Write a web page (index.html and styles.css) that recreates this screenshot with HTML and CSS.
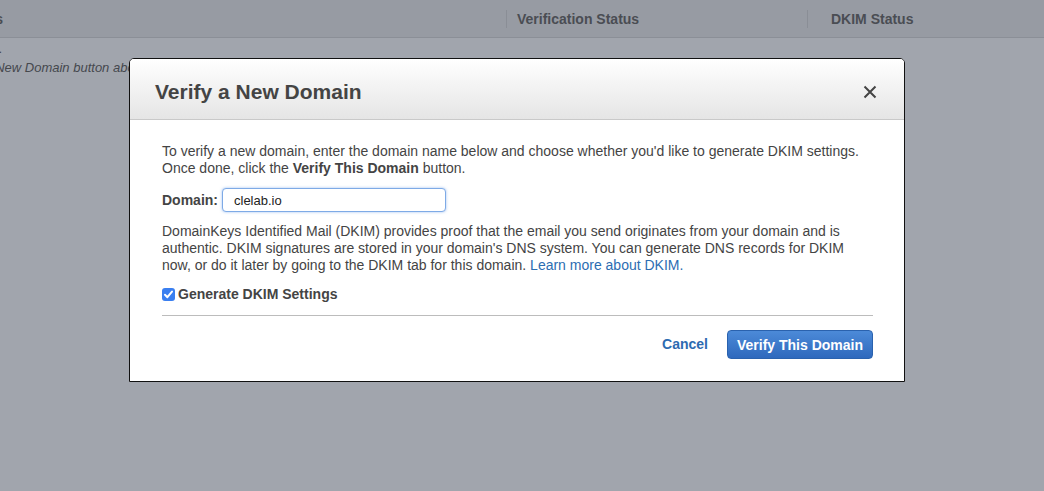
FILE: index.html
```html
<!DOCTYPE html>
<html lang="en">
<head>
    <meta charset="UTF-8">
    <title>Verify a New Domain</title>
    <link rel="stylesheet" href="styles.css">
</head>
<body>
    <!-- Domain list behind the dialog -->
    <div class="domain-table">
        <div class="table-head">
            <div class="col col-name">Domains</div>
            <div class="col col-verify">Verification Status</div>
            <div class="col col-dkim">DKIM Status</div>
        </div>
        <div class="empty-msg">
            <p class="found">No domains found.</p>
            <p class="hint">To get started, click the Verify a New Domain button above.</p>
        </div>
    </div>

    <!-- Verify dialog -->
    <div class="dialog">
        <div class="dialog-header">
            <h2>Verify a New Domain</h2>
            <button class="close-btn" aria-label="Close">
                <svg width="14" height="14" viewBox="0 0 14 14">
                    <path d="M1.5 1.5 L12.5 12.5 M12.5 1.5 L1.5 12.5" stroke="#444" stroke-width="2" fill="none"/>
                </svg>
            </button>
        </div>
        <div class="dialog-body">
            <p>To verify a new domain, enter the domain name below and choose whether you'd like to generate DKIM settings. Once done, click the <b>Verify This Domain</b> button.</p>

            <div class="domain-row">
                <label for="domain">Domain:</label>
                <input id="domain" class="domain-input" type="text" value="clelab.io">
            </div>

            <p>DomainKeys Identified Mail (DKIM) provides proof that the email you send originates from your domain and is authentic. DKIM signatures are stored in your domain's DNS system. You can generate DNS records for DKIM now, or do it later by going to the DKIM tab for this domain. <a href="#">Learn more about DKIM.</a></p>

            <div class="check-row">
                <span class="checkbox">
                    <svg width="13" height="13" viewBox="0 0 13 13">
                        <path d="M3 6.8 L5.4 9.2 L10 3.6" stroke="#fff" stroke-width="2" fill="none" stroke-linecap="round" stroke-linejoin="round"/>
                    </svg>
                </span>
                <span class="check-label">Generate DKIM Settings</span>
            </div>

            <div class="dialog-footer">
                <a href="#" class="cancel-link">Cancel</a>
                <button class="verify-btn">Verify This Domain</button>
            </div>
        </div>
    </div>
</body>
</html>
```

FILE: styles.css
```css
/* General styling */
body {
    font-family: "Liberation Sans", Arial, sans-serif;
    margin: 0;
    padding: 0;
    width: 1044px;
    height: 491px;
    overflow: hidden;
    background-color: #a1a5ad;
    color: #444;
}

/* Domain list (behind the dialog) */
.domain-table {
    margin-left: -54px;
}

.table-head {
    display: flex;
    height: 37px;
    align-items: center;
    background-color: #979ba3;
    border-bottom: 1px solid #8b8f97;
    font-size: 14px;
    font-weight: bold;
    color: #4a4d53;
}

.col {
    height: 18px;
    line-height: 18px;
    padding-left: 10px;
}

.col-name {
    width: 560px;
    padding-left: 0;
    text-indent: -2px;
}

.col-verify {
    width: 290px;
    border-left: 1px solid #8a8e96;
}

.col-dkim {
    border-left: 1px solid #8a8e96;
    padding-left: 23px;
}

.empty-msg {
    padding-top: 1px;
    font-size: 13px;
    line-height: 19px;
    color: #45484d;
    white-space: nowrap;
}

.empty-msg p {
    margin: 0;
}

.empty-msg .found {
    width: 180px;
    margin-left: -124px;
    text-align: right;
}

.empty-msg .hint {
    width: 420px;
    margin-left: -214px;
    text-align: right;
    font-style: italic;
}

/* Dialog */
.dialog {
    position: absolute;
    left: 129px;
    top: 58px;
    width: 774px;
    background-color: #fff;
    border: 1.5px solid #111;
    border-radius: 5px 5px 0 0;
}

.dialog-header {
    display: flex;
    justify-content: space-between;
    align-items: center;
    height: 60px;
    padding: 0 27px 0 25px;
    background: linear-gradient(#ffffff, #e5e5e5);
    border-bottom: 1px solid #c9c9c9;
    border-radius: 4px 4px 0 0;
}

.dialog-header h2 {
    margin: 0;
    font-size: 21px;
    font-weight: bold;
    color: #444;
    padding-top: 6px;
}

.close-btn {
    border: none;
    background: none;
    padding: 0;
    margin-top: 6px;
    cursor: pointer;
    display: flex;
}

.dialog-body {
    padding: 23px 31px 22px 32px;
    font-size: 14px;
    line-height: 17px;
}

.dialog-body p {
    margin: 0;
}

.dialog-body a {
    color: #2c6db2;
    text-decoration: none;
}

/* Domain field */
.domain-row {
    display: flex;
    align-items: center;
    margin: 11px 0 11px;
}

.domain-row label {
    font-weight: bold;
    margin-right: 4px;
}

.domain-input {
    width: 224px;
    height: 24px;
    box-sizing: border-box;
    padding: 0 11px;
    border: 1px solid #7eaae6;
    border-radius: 4px;
    box-shadow: 0 0 3px rgba(80, 140, 230, 0.55);
    font-family: inherit;
    font-size: 13px;
    color: #222;
    outline: none;
}

/* Checkbox */
.check-row {
    display: flex;
    align-items: center;
    margin-top: 12px;
    padding-bottom: 12px;
    border-bottom: 1px solid #bcbcbc;
}

.checkbox {
    width: 13px;
    height: 13px;
    border-radius: 3px;
    background-color: #3a7ff0;
    display: flex;
    margin-right: 3px;
}

.check-label {
    font-size: 14px;
    font-weight: bold;
}

/* Footer buttons */
.dialog-footer {
    display: flex;
    justify-content: flex-end;
    align-items: center;
    margin-top: 14px;
}

.dialog-body .cancel-link {
    font-size: 14px;
    font-weight: bold;
    color: #2d6bb1;
    margin-right: 19px;
}

.verify-btn {
    height: 29px;
    width: 146px;
    font-family: inherit;
    font-size: 14px;
    font-weight: bold;
    color: #fff;
    background: linear-gradient(#4c8ad8, #2e69bd);
    border: 1px solid #2a62ae;
    border-radius: 4px;
    cursor: pointer;
}
```
